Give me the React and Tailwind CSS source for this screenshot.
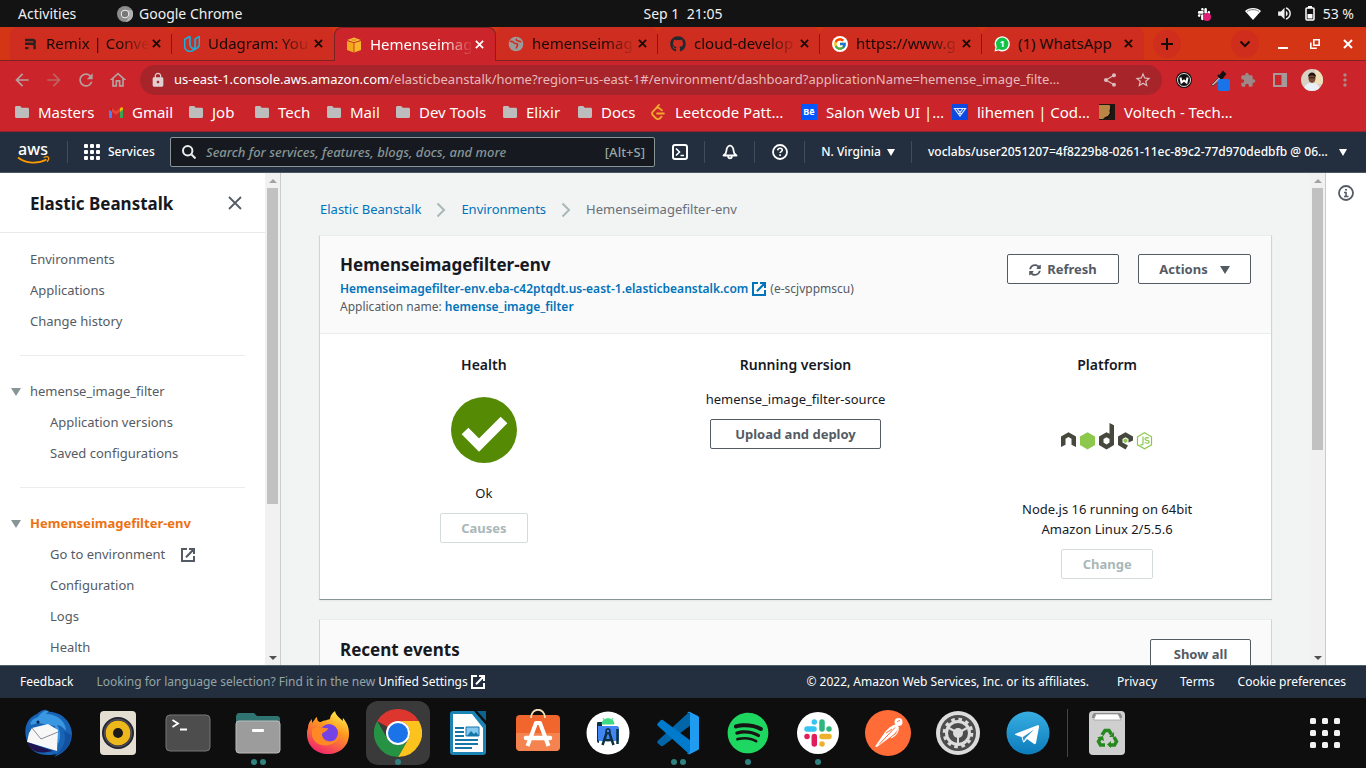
import React from "react";
import { FaGithub, FaSlack, FaSpotify, FaSyncAlt } from "react-icons/fa";
import { FcGoogle } from "react-icons/fc";
import { SiUdacity, SiLeetcode } from "react-icons/si";
import {
  MdArrowBack, MdArrowForward, MdRefresh, MdLock, MdShare, MdStarBorder,
  MdExtension, MdMoreVert, MdVolumeUp, MdOutlineHome,
} from "react-icons/md";

const UI = "font-['Noto_Sans',sans-serif]";

function Globe() {
  return (
    <svg viewBox="0 0 16 16" className="size-4 shrink-0">
      <circle cx="8" cy="8" r="7.3" fill="#9b9b9b" />
      <path d="M2 5.500c2.500-.5 3.500.3 4 1.500s3-.2 3.600 1.400c.6 1.600-1.300 2-1.300 4M9 3c-1.400.5-.6 1.800.8 1.800s1.800 1 3.400 1" fill="none" stroke="#cf2d20" strokeWidth="1.600" />
    </svg>
  );
}

function Remix() {
  return (
    <svg viewBox="0 0 16 16" className="size-4 shrink-0">
      <path d="M3 4h7.500c1.500 0 2.300.7 2.300 1.900s-.8 1.900-2 1.900H3M8 7.900h2.500c1.500 0 2.100.8 2.100 2v3.300" fill="none" stroke="#2a2020" strokeWidth="2.400" />
      <path d="M3 11h3.500v2.200H3z" fill="#2a2020" />
    </svg>
  );
}

function Cube() {
  return (
    <svg viewBox="0 0 16 16" className="size-4 shrink-0">
      <path d="M1 4l6.600 2v9.500L1 13z" fill="#f2a81d" />
      <path d="M15 4L8.400 6v9.500L15 13z" fill="#f7b52a" />
      <path d="M1.200 3L8 .5 14.800 3 8 5.200z" fill="#fbbf3d" />
      <path d="M5 1.800l5.500 2.400M11 1.800L5.500 4.200" stroke="#d98a12" strokeWidth=".7" />
    </svg>
  );
}

function WhatsAppBadge() {
  return (
    <svg viewBox="0 0 16 16" className="size-4 shrink-0">
      <path d="M.5 15.500l1-4A7.600 7.600 0 1 1 4.600 14.600z" fill="#fff" />
      <circle cx="8.200" cy="7.800" r="6.200" fill="#13c143" />
      <path d="M2 14l1-4 3 3z" fill="#13c143" />
      <text x="8.200" y="11.200" fontSize="9.500" fontWeight="700" fill="#fff" textAnchor="middle">1</text>
    </svg>
  );
}

const tabs = [
  { label: "Remix | Conver", icon: <Remix /> },
  { label: "Udagram: You", icon: <SiUdacity className="size-4 shrink-0 text-[#12b5e5]" strokeWidth="1" stroke="currentColor" /> },
  { label: "Hemenseimag", icon: <Cube />, active: true },
  { label: "hemenseimag", icon: <Globe /> },
  { label: "cloud-develop", icon: <FaGithub className="size-4 shrink-0 text-[#24292f]" /> },
  { label: "https://www.g", icon: <span className="flex size-4 shrink-0 items-center justify-center rounded-full bg-white"><FcGoogle className="size-3.5" /></span> },
  { label: "(1) WhatsApp", icon: <WhatsAppBadge />, full: true },
];

function Cross({ className = "" }) {
  return <svg viewBox="0 0 10 10" className={"shrink-0 " + className} fill="none" stroke="currentColor" strokeWidth="2"><path d="M1 1l8 8M9 1L1 9" /></svg>;
}

function Tab({ tab, last }) {
  return (
    <div
      className={
        "relative flex w-[162px] shrink-0 items-center rounded-t-lg pr-2.5 " +
        (tab.active
          ? "z-10 -mb-px border border-b-0 border-[#7b2422] bg-[#cb242a] pl-[11px] text-white"
          : "bg-[#cf2d20] pl-3 text-[#180a08]")
      }
    >
      {tab.icon}
      <span className={"ml-2 min-w-0 flex-1 text-[15px] whitespace-nowrap " + (tab.full ? "" : "mask-r-from-70% mask-r-to-100%")}>
        {tab.label}
      </span>
      <button aria-label="Close tab" className="flex w-3 justify-center"><Cross className="size-[9px]" /></button>
      {!tab.active && !last && <span className="absolute top-1/5 right-0 h-5 w-px bg-[#7b1d16]" />}
    </div>
  );
}

function Folder() {
  return (
    <svg viewBox="0 0 14 12" className="h-3 w-3.5 shrink-0"><path d="M0 1.500C0 .7.600 0 1.500 0h3.700l1.500 1.800h5.800c.9 0 1.500.6 1.500 1.400v7.300c0 .9-.6 1.500-1.500 1.500h-11C.6 12 0 11.400 0 10.500z" fill="#bdbdbd" /></svg>
  );
}

function Gmail() {
  return (
    <svg viewBox="0 0 14 11" className="h-[11px] w-3.5 shrink-0">
      <path d="M0 2v8.200c0 .4.400.8.900.8H3V4.500z" fill="#4285f4" />
      <path d="M14 2v8.200c0 .4-.4.8-.9.8H11V4.500z" fill="#34a853" />
      <path d="M3 1.200l4 3 4-3v3.500l-4 3-4-3z" fill="#ea4335" />
      <path d="M11 1.200C12.500-.3 14 .4 14 1.800v.7l-3 2.300z" fill="#fbbc04" />
      <path d="M3 1.200C1.500-.3 0 .4 0 1.800v.7l3 2.300z" fill="#c5221f" />
    </svg>
  );
}

const bookmarks = [
  ["Masters", "w-[94px]", <Folder />],
  ["Gmail", "w-[80px]", <Gmail />],
  ["Job", "w-[66px]", <Folder />],
  ["Tech", "w-[72px]", <Folder />],
  ["Mail", "w-[69px]", <Folder />],
  ["Dev Tools", "w-[107px]", <Folder />],
  ["Elixir", "w-[75px]", <Folder />],
  ["Docs", "w-[72px]", <Folder />],
  ["Leetcode Patt…", "w-[151px]", <SiLeetcode className="size-4 shrink-0 text-[#f0a92e]" />],
  ["Salon Web UI |…", "w-[151px]", <span className="flex size-4 shrink-0 items-center justify-center bg-[#0057ff] text-[9px] font-bold">Bē</span>],
  ["lihemen | Cod…", "w-[147px]", (
    <svg viewBox="0 0 16 16" className="size-4 shrink-0"><path fill="#0a4ae0" d="M0 0h16v16H0z" /><path d="M2.500 4.500h11L8 12zM5 4.500l3 4 3-4M6 9.500h4" fill="none" stroke="#dfe8ff" strokeWidth="1.200" /></svg>
  )],
  ["Voltech - Tech…", "w-[150px]", (
    <svg viewBox="0 0 16 16" className="size-4 shrink-0"><path fill="#1f1712" d="M0 0h16v16H0z" /><path d="M0 1h10.500l1 3-1 2 .5 3-2 3-3 1-2 2H0z" fill="#b98545" /><path d="M11.500 3c1 2-1 4 0 6-1 3-3 4-5 5" fill="none" stroke="#0c0a08" /></svg>
  )],
];

function Down({ className = "" }) {
  return <svg viewBox="0 0 10 8" preserveAspectRatio="none" className={"shrink-0 " + className}><path d="M0 0h10L5 8z" fill="currentColor" /></svg>;
}

function External({ className = "" }) {
  return (
    <svg viewBox="0 0 14 14" className={"shrink-0 " + className} fill="none" stroke="currentColor" strokeWidth="2">
      <path d="M6 1H1v12h12V8M8 1h5v5M13 1L5 9.300" />
    </svg>
  );
}

function Divider() {
  return <span className="h-[22px] w-px bg-[#414d5c]" />;
}

function AwsBar() {
  return (
    <header className="flex h-[42px] shrink-0 items-center border-t border-b border-t-[#95222d] border-b-[#4c5661] bg-[#232f3e] pr-4 pl-[17px] text-[12px] font-medium text-white">
      <a href="#home" className="flex w-[50px] shrink-0 flex-col">
        <span className="w-8 text-center text-[16px] leading-4">aws</span>
        <svg viewBox="0 0 34 8" className="-mt-px h-2 w-[34px]">
          <path d="M1 1.500c8 6.500 20 6.500 28.500 2" fill="none" stroke="#f90" strokeWidth="1.800" />
          <path d="M26.500 1.500c2-.8 4.500-.8 5 0s-.3 3-1.500 4.300" fill="none" stroke="#f90" strokeWidth="1.300" />
        </svg>
      </a>
      <Divider />
      <button className="ml-4 flex shrink-0 items-center gap-2">
        <svg viewBox="0 0 16 16" className="size-4" fill="#fff">
          {[0, 6, 12].map((y) => [0, 6, 12].map((x) => <rect key={x + "-" + y} x={x} y={y} width="4" height="4" rx="1" />))}
        </svg>
        <span className="w-[62px] text-left">Services</span>
      </button>
      <label className="flex h-[30px] min-w-0 flex-1 items-center rounded-xs border border-[#879596] bg-[#16191f] px-[9px]">
        <svg viewBox="0 0 14 14" className="mr-2.5 ml-0.5 size-3.5 shrink-0" fill="none" stroke="#eaeded" strokeWidth="2"><circle cx="5.700" cy="5.700" r="4.700" /><path d="M9.300 9.300L13.500 13.500" /></svg>
        <input aria-label="Search" placeholder="Search for services, features, blogs, docs, and more" className="min-w-0 flex-1 pt-0.5 text-[13px] outline-none placeholder:text-[#879596] placeholder:italic" />
        <span className="pt-0.5 text-[13px] text-[#95a5a6]">[Alt+S]</span>
      </label>
      <button aria-label="CloudShell" className="flex w-[49px] shrink-0 justify-center">
        <svg viewBox="0 0 16 16" className="size-4" fill="none" stroke="#fff" strokeWidth="2"><rect x="1" y="1" width="14" height="14" rx="2" /><path d="M4 4.500L7.500 8 4 11.500M8.500 11.500h3.500" strokeWidth="1.600" /></svg>
      </button>
      <Divider />
      <button aria-label="Notifications" className="flex w-[49px] shrink-0 justify-center">
        <svg viewBox="0 0 16 16" className="size-4" fill="none" stroke="#fff" strokeWidth="1.800"><path d="M8 1.500c-2.500.8-3.500 2.500-3.500 5 0 2-1 3.500-3 5h13c-2-1.500-3-3-3-5 0-2.500-1-4.200-3.500-5zM6 12.500c.5 2.500 3.500 2.500 4 0" strokeLinejoin="round" /></svg>
      </button>
      <Divider />
      <button aria-label="Help" className="flex w-[49px] shrink-0 justify-center">
        <svg viewBox="0 0 16 16" className="size-4" fill="none" stroke="#fff" strokeWidth="1.800"><circle cx="8" cy="8" r="7" /><path d="M5.700 6.300c.2-1.600 1.100-2.100 2.300-2.100 1.400 0 2.300.8 2.300 1.900 0 1.500-2.200 1.500-2.200 3M8.100 10.200v1.800" strokeWidth="1.600" /></svg>
      </button>
      <Divider />
      <button className="flex w-[106px] shrink-0 items-center justify-center gap-1.5">N. Virginia <Down className="h-[7px] w-2" /></button>
      <Divider />
      <button className="flex shrink-0 items-center justify-end gap-1.5 pl-4">
        <span className="w-[405px] text-left whitespace-nowrap">voclabs/user2051207=4f8229b8-0261-11ec-89c2-77d970dedbfb @ 06...</span>
        <Down className="mr-[3px] h-[7px] w-2" />
      </button>
    </header>
  );
}

function ScrollBar({ thumb }) {
  return (
    <div className="flex w-[15px] shrink-0 flex-col items-center bg-[#f1f1f1]">
      <div className="flex h-[15px] items-center"><Down className="h-1 w-2 rotate-180 text-[#a3a3a3]" /></div>
      <div className={"w-[11px] bg-[#c1c1c1] " + thumb} />
      <div className="mt-auto flex h-[15px] items-center"><Down className="h-1 w-2 text-[#505050]" /></div>
    </div>
  );
}

function NavItem({ children, sub, href = "#nav" }) {
  return (
    <li className={"flex h-[31px] items-center pt-0.5 " + (sub ? "pl-[50px]" : "pl-[30px]")}>
      <a href={href} className="flex items-center gap-3">{children}</a>
    </li>
  );
}

function Group({ label, active }) {
  return (
    <li className="flex h-[31px] items-center pt-0.5 pl-[11px]">
      <button aria-label={"Toggle " + label} className="w-[19px] text-[#879596]"><Down className="h-2 w-2.5" /></button>
      <a href="#group" className={active ? "font-bold text-[#ec7211]" : ""}>{label}</a>
    </li>
  );
}

function Sidebar() {
  return (
    <aside className="flex w-[281px] shrink-0 overflow-hidden border-r border-[#c8cccc] bg-white">
      <div className="min-w-0 flex-1 overflow-hidden">
        <div className="flex h-[60px] items-center justify-between border-b border-[#e6e9e9] pr-[23px] pl-[30px]">
          <h2 className="pt-0.5 text-[17px] font-bold text-[#16191f]">Elastic Beanstalk</h2>
          <button aria-label="Close navigation" className="text-[#545b64]">
            <svg viewBox="0 0 14 14" className="size-3.5" fill="none" stroke="currentColor" strokeWidth="1.800"><path d="M1 1l12 12M13 1L1 13" /></svg>
          </button>
        </div>
        <nav className="pt-[10px] text-[13px] text-[#545b64]">
          <ul><NavItem>Environments</NavItem><NavItem>Applications</NavItem><NavItem>Change history</NavItem></ul>
          <hr className="mx-5 my-[19px] border-[#eaeded]" />
          <ul><Group label="hemense_image_filter" /><NavItem sub>Application versions</NavItem><NavItem sub>Saved configurations</NavItem></ul>
          <hr className="mx-5 my-[19px] border-[#eaeded]" />
          <ul>
            <Group label="Hemenseimagefilter-env" active />
            <NavItem sub>Go to environment <External className="ml-1 size-3.5" /></NavItem>
            <NavItem sub>Configuration</NavItem><NavItem sub>Logs</NavItem><NavItem sub>Health</NavItem>
          </ul>
        </nav>
      </div>
      <ScrollBar thumb="h-[316px]" />
    </aside>
  );
}

function Button({ children, disabled, className = "" }) {
  return (
    <button
      disabled={disabled}
      className={"flex h-[30px] items-center justify-center rounded-xs border bg-white pt-0.5 text-[13px] font-bold " +
        (disabled ? "border-[#d5dbdb] text-[#aab7b8] " : "border-[#545b64] text-[#545b64] ") + className}
    >
      {children}
    </button>
  );
}

function NodeLogo() {
  return (
    <svg viewBox="0 0 92 28" className="h-7 w-[92px]">
      <path d="M0 24V13.500L7.500 9.200 15 13.500V24l-4.500-2.300v-6L7.500 14l-3 1.700v6z" fill="#46483e" />
      <path d="M26.500 9.200L34 13.500v8.600l-7.500 4.300-7.500-4.300v-8.600z" fill="#8cc84b" />
      <path fillRule="evenodd" d="M48.500 0l4.500 2.300v19.800l-7.500 4.300-7.500-4.300v-8.600l7.500-4.300 3 1.600zM45.500 14.200l-3 1.800v3.600l3 1.800 3-1.800V16z" fill="#46483e" />
      <path fillRule="evenodd" d="M64.500 9.200L72 13.500v4l-4.500 2v-3.500l-3-1.800-3 1.800v3.600l5.500 3-2.500 3.800-7.500-4.300v-8.600z" fill="#46483e" />
      <path d="M64.500 15.500l2 1.100v2.200l-2 1.100-2-1.100v-2.200z" fill="#8cc84b" />
      <path d="M83.500 9.800l7 4v8l-7 4-7-4v-8z" fill="#fff" stroke="#8cc84b" strokeWidth="1.200" />
      <path d="M82 13.500v7c0 1.500-1.500 1.800-2.700.9M88 15.200c-1.500-1-4-.7-4 .8 0 1.800 4.200.8 4.200 2.800 0 1.700-2.900 1.900-4.500.6" fill="none" stroke="#8cc84b" strokeWidth="1.200" />
    </svg>
  );
}

function Crumb() {
  return <svg viewBox="0 0 10 16" className="mx-[15px] h-4 w-2.5" fill="none" stroke="#aab7b8" strokeWidth="2"><path d="M1.500 1.500L8 8l-6.500 6.500" /></svg>;
}

function Content() {
  return (
    <main className="min-w-0 flex-1 overflow-hidden bg-[#f2f3f3] px-[38px] text-[13px] text-[#16191f]">
      <nav aria-label="Breadcrumb" className="flex h-[62px] items-center pt-3 pl-px text-[#0073bb]">
        <a href="#eb">Elastic Beanstalk</a>
        <Crumb />
        <a href="#envs">Environments</a>
        <Crumb />
        <span className="text-[#687078]">Hemenseimagefilter-env</span>
      </nav>

      <section className="border border-t-[#eaeded] border-r-[#d0d4d4] border-b-[#879596] border-l-[#d0d4d4] bg-white shadow-xs">
        <div className="flex justify-between border-b border-[#eaeded] bg-[#fafafa] px-5 pt-[15px] pb-[18px]">
          <div>
            <h1 className="h-7 text-[17px] leading-7 font-bold">Hemenseimagefilter-env</h1>
            <p className="flex h-[18px] items-center pt-px text-[12px] text-[#545b64]">
              <a href="#url" className="font-semibold text-[#0073bb]">Hemenseimagefilter-env.eba-c42ptqdt.us-east-1.elasticbeanstalk.com</a>
              <External className="mx-1 size-3.5 text-[#0073bb]" />
              (e-scjvppmscu)
            </p>
            <p className="h-[18px] text-[12px] leading-5 text-[#545b64]">
              Application name: <a href="#app" className="font-semibold text-[#0073bb]">hemense_image_filter</a>
            </p>
          </div>
          <div className="flex gap-[19px] pt-[3px]">
            <Button className="w-28 gap-1.5"><FaSyncAlt className="size-3" />Refresh</Button>
            <Button className="w-[113px] gap-3">Actions <Down className="h-2 w-2.5" /></Button>
          </div>
        </div>
        <div className="grid h-[265px] grid-cols-3 px-2 pt-[21px]">
          <div className="flex flex-col items-center">
            <h3 className="text-[14px] leading-5 font-semibold">Health</h3>
            <svg viewBox="0 0 66 66" className="mt-[22px] size-[66px]"><circle cx="33" cy="33" r="33" fill="#548a04" /><path d="M14 34l14 14 25-25" fill="none" stroke="#fff" strokeWidth="9.500" /></svg>
            <p className="mt-5 mb-2.5 leading-5">Ok</p>
            <Button disabled className="w-[88px]">Causes</Button>
          </div>
          <div className="flex flex-col items-center">
            <h3 className="text-[14px] leading-5 font-semibold">Running version</h3>
            <p className="mt-[14px] mb-2.5 leading-5">hemense_image_filter-source</p>
            <Button className="w-[171px]">Upload and deploy</Button>
          </div>
          <div className="flex flex-col items-center">
            <h3 className="text-[14px] leading-5 font-semibold">Platform</h3>
            <div className="my-12"><NodeLogo /></div>
            <p className="mb-2.5 text-center leading-5">Node.js 16 running on 64bit<br />Amazon Linux 2/5.5.6</p>
            <Button disabled className="w-[92px]">Change</Button>
          </div>
        </div>
      </section>

      <section className="mt-[19px] h-24 border border-[#d0d4d4] border-t-[#eaeded] bg-[#fafafa]">
        <div className="flex justify-between px-5 pt-[19px]">
          <h2 className="text-[17px] leading-[22px] font-bold">Recent events</h2>
          <Button className="w-[101px]">Show all</Button>
        </div>
      </section>
    </main>
  );
}

const dock = [
  { name: "Thunderbird", dots: 0, icon: (
    <svg viewBox="0 0 48 48" className="size-12">
      <path d="M3 32C-2 17 5 8 13 5c3-3 7-5 10-4l-2 2c14-2 26 8 27 21 0 12-7 20-18 24l3-3-6 1C13 47 6 41 3 32z" fill="#1863b4" />
      <path d="M14 8c4-6 8-7 11-6l-3 3c12 0 20 8 20 17-3-4-6-6-9-6 4 6 4 14 1 19l-3-18-17-3-7 2c-2-3 2-6 7-8z" fill="#3a97e2" />
      <path d="M40 22c3 9-1 18-8 24 9-3 15-11 15-20z" fill="#1250a0" />
      <path d="M5 24l3-5 16-4 10 6-1 21L3 33z" fill="#f7f7f8" />
      <path d="M8 19l9 11 17-7" fill="none" stroke="#8b8b94" strokeWidth="1" />
      <path d="M3 33l26 9-6 1C13 45 6 41 3 33z" fill="#20134f" />
      <circle cx="14" cy="13" r="1.500" fill="#0d1e38" />
    </svg>) },
  { name: "Rhythmbox", dots: 0, icon: (
    <svg viewBox="0 0 48 48" className="size-12">
      <rect x="6" y="2" width="36" height="44" rx="4" fill="#e4ded2" /><circle cx="24" cy="24" r="16" fill="#242430" /><circle cx="24" cy="24" r="12.500" fill="#edb81b" /><circle cx="24" cy="24" r="13.500" fill="none" stroke="#4c4c58" strokeWidth="1.500" /><circle cx="24" cy="24" r="5" fill="#1d1b1a" />
    </svg>) },
  { name: "Terminal", dots: 0, icon: (
    <svg viewBox="0 0 48 48" className="size-12">
      <rect x="2" y="6" width="44" height="36" rx="4" fill="#4d4d4d" stroke="#777" /><path d="M8.500 11l5.500 3.500L8.500 18M16 20.500h7" fill="none" stroke="#fff" strokeWidth="1.800" />
    </svg>) },
  { name: "Files", dots: 2, icon: (
    <svg viewBox="0 0 48 48" className="size-12">
      <path d="M2 8c0-2 1-4 3-4h15l3 3h20c2 0 3 1 3 3v12H2z" fill="#2f7470" /><rect x="2" y="12" width="44" height="32" rx="3" fill="#9c9c9c" stroke="#bcbcbc" /><rect x="18" y="20" width="12" height="3" rx="1" fill="#fff" />
    </svg>) },
  { name: "Firefox", dots: 0, icon: (
    <svg viewBox="0 0 48 48" className="size-12">
      <defs><linearGradient id="fx" x1=".8" y1="0" x2=".3" y2="1"><stop offset="0" stopColor="#fff44f" /><stop offset=".4" stopColor="#ff9a1f" /><stop offset="1" stopColor="#f0246c" /></linearGradient></defs>
      <path d="M4 19c0-5 3-8 4-9v4c2-2 3-5 5-6 0 3 1 5 4 5 3-2 8-2 9-3 0-3 2-6 5-8 1 5 5 7 8 10-.5-2 0-3 0-3 4 5 6 9 6 16 0 12-9 20-21 20S3 37 3 25c0-2 0-4 1-6z" fill="url(#fx)" />
      <circle cx="25" cy="24" r="9" fill="#7542e5" />
      <path d="M8 20c7-4 11 0 16-1 0 3-5 4-6 6 0 7 11 12 18 1-2 11-23 16-28 1z" fill="#ff8a25" />
    </svg>) },
  { name: "Chrome", dots: 1, active: true, icon: (
    <svg viewBox="0 0 48 48" className="size-12">
      <path d="M24 24L3.200 12A24 24 0 0 1 44.800 12z" fill="#dc362e" />
      <path d="M24 24L44.800 12H24A12 12 0 0 1 34.400 30L24 48A24 24 0 0 0 44.800 12z" fill="#fcc31e" />
      <path d="M3.200 12A24 24 0 0 0 24 48l10.400-18A12 12 0 0 1 13.600 30z" fill="#269344" />
      <circle cx="24" cy="24" r="12" fill="#fff" /><circle cx="24" cy="24" r="10" fill="#1a73e8" />
    </svg>) },
  { name: "Writer", dots: 0, icon: (
    <svg viewBox="0 0 48 48" className="size-12">
      <path d="M9 2h21l12 14v27c0 2-1 3-3 3H9c-2 0-3-1-3-3V5c0-2 1-3 3-3z" fill="#1c83b5" /><path d="M9 5h19l11 14v24H9z" fill="#fff" /><path d="M33 2h9v10z" fill="#0d638f" />
      <path d="M11 19h9M11 23h9M11 27h9M11 31h23M11 35h23M11 39h17" stroke="#1676a8" strokeWidth="2" /><path d="M22 18h13v9H22z" fill="#86c8f0" stroke="#1676a8" /><path d="M23 27l4-5 3 3 2-2 3 4z" fill="#1676a8" />
    </svg>) },
  { name: "Software", dots: 0, icon: (
    <svg viewBox="0 0 48 48" className="size-12">
      <rect x="2" y="6" width="44" height="36" rx="4" fill="#f0662d" /><path d="M2 24h44v14c0 2-2 4-4 4H6c-2 0-4-2-4-4z" fill="#f5834f" /><path d="M17 9c0-11 14-11 14 0" fill="none" stroke="#f7dfb8" strokeWidth="1.800" />
      <path d="M13.500 37L22 14h4l8.500 23" fill="none" stroke="#fff" strokeWidth="4" strokeLinejoin="round" /><path d="M12 29h24" stroke="#fff" strokeWidth="4.500" strokeLinecap="round" />
    </svg>) },
  { name: "Android Studio", dots: 0, icon: (
    <svg viewBox="0 0 48 48" className="size-12">
      <circle cx="24" cy="24" r="21.500" fill="#fff" /><path d="M13 14c0-1 1-1 1-1h4v4h-3v17c-1 0-2-1-2-2z" fill="#0b3042" /><path d="M14 17h19c1 0 2 1 2 2v13H16c-1 0-2-1-2-2z" fill="#4285f4" /><path d="M18 15c0-7 12-7 12 0zM19 9l1.500 2.500M29 9l-1.500 2.500" fill="#3ddc84" stroke="#3ddc84" strokeWidth="1" /><path d="M24 20l-5.500 16M24 20l5.500 16M20 30c3 2 5 2 8 0M33.500 20v15" fill="none" stroke="#0b3042" strokeWidth="2.500" /><circle cx="24" cy="22" r="2" fill="#4285f4" stroke="#0b3042" strokeWidth="1.500" />
    </svg>) },
  { name: "VS Code", dots: 2, icon: (
    <svg viewBox="0 0 48 48" className="size-12">
      <path d="M34 4l3 1v11L9.500 36.500c-1 1-2 1-3 0L4 34.500c-1-1-1-2 0-3z" fill="#0065a9" /><path d="M4 17c-1-1-1-2 0-3l2.500-2.500c1-1 2-1 3 0L37 32v12h-3z" fill="#007acc" /><path d="M33 4c1-1.300 2-1.500 3-1l7 3.500c1.500.5 2 1 2 2.500v30c0 1.500-.5 2-2 2.500L36 45c-1 .5-2.500.3-3.500-1 2 1 3.500 0 3.500-2V6c0-2-1-2.500-3-2z" fill="#1f9cf0" />
    </svg>) },
  { name: "Spotify", dots: 1, icon: <FaSpotify className="size-[42px] rounded-full bg-[#191414] text-[#1ed760]" /> },
  { name: "Slack", dots: 1, icon: (
    <svg viewBox="0 0 48 48" className="size-12">
      <circle cx="24" cy="24" r="21" fill="#fff" />
      <g fill="none" strokeWidth="5.500" strokeLinecap="round"><path d="M13 20h7M20.300 13v0" stroke="#36c5f0" /><path d="M28 13v7M35 20v0" stroke="#2eb67d" /><path d="M28 27.500h7M28 35v0" stroke="#ecb22e" /><path d="M20.300 27.500v7.500M13 27.500v0" stroke="#e01e5a" /></g>
    </svg>) },
  { name: "Postman", dots: 0, icon: (
    <svg viewBox="0 0 48 48" className="size-12">
      <circle cx="24" cy="24" r="23" fill="#ff6c37" />
      <path d="M31.500 15.500c1.500 0 3 1.500 3 3-1 3-3 5-5.500 7.500L13 38l-2-.5L21 23c3-3.500 6.500-6.500 10.500-7.500z" fill="#fff" />
      <path d="M34 18c1 5-3 9-7 11M22 27l-3 5M29 20l-6 6" fill="none" stroke="#fff" strokeWidth="1.300" />
      <path d="M31 18.500L15 35.500M28 20l-6 4" fill="none" stroke="#ff6c37" strokeWidth="1" />
      <circle cx="34.500" cy="13" r="4" fill="#fff" /><path d="M33 12.500l3-1" stroke="#ff6c37" strokeWidth=".9" />
    </svg>) },
  { name: "Settings", dots: 0, icon: (
    <svg viewBox="0 0 48 48" className="size-12">
      <circle cx="24" cy="24" r="22" fill="#dcdcdc" /><circle cx="24" cy="24" r="18" fill="#4d4d4d" />
      <circle cx="24" cy="24" r="11.500" fill="none" stroke="#dcdcdc" strokeWidth="3" /><circle cx="24" cy="24" r="13.800" fill="none" stroke="#dcdcdc" strokeWidth="3" strokeDasharray="3.600 3.625" /><circle cx="24" cy="24" r="5" fill="#dcdcdc" /><path d="M24 24V35M24 24L14 18.500M24 24l10-5.500" stroke="#dcdcdc" strokeWidth="2" />
    </svg>) },
  { name: "Telegram", dots: 0, icon: (
    <svg viewBox="0 0 48 48" className="size-12">
      <defs><linearGradient id="tg" x1="0" y1="0" x2="0" y2="1"><stop offset="0" stopColor="#37aee2" /><stop offset="1" stopColor="#0c7cbb" /></linearGradient></defs>
      <circle cx="24" cy="24" r="21.500" fill="url(#tg)" /><path d="M11 25l22.500-8.700c1.200-.4 1.800.3 1.500 1.700L32 34c-.3 1.200-1.200 1.400-2.200.8L23 30l-2.500 3c-.8.700-1.400.4-1.600-.6L17.500 28 11 25.800z" fill="#fff" /><path d="M18.500 28.300L30 20.500l-8.500 8.800-1.700 3z" fill="#2f95cf" />
    </svg>) },
];

function DockIcon({ app }) {
  return (
    <button aria-label={app.name} className="relative flex w-[70px] shrink-0 justify-center">
      <span className={"flex size-16 items-center justify-center rounded-xl " + (app.active ? "bg-[#3a3a3a]" : "")}>{app.icon}</span>
      <span className="absolute inset-x-0 bottom-0 flex justify-center gap-[3px]">
        {Array.from({ length: app.dots }).map((_, i) => <span key={i} className="size-1.5 rounded-full bg-[#308280]" />)}
      </span>
    </button>
  );
}

export default function App() {
  return (
    <div className={"flex h-screen flex-col overflow-hidden bg-[#0e0e0e] " + UI}>
      <div className="grid h-[27px] shrink-0 grid-cols-3 items-center bg-[#131313] px-[18px] text-[14px] text-[#f0f0f0]">
        <div className="flex items-center">
          <button className="w-[99px] text-left">Activities</button>
          <svg viewBox="0 0 16 16" className="mr-1.5 size-4"><circle cx="8" cy="8" r="8" fill="#8c8c8c" /><path d="M8 4h7a8 8 0 0 1-6 12l3-6z" fill="#b0b0b0" /><circle cx="8" cy="8" r="4.200" fill="#eee" /><circle cx="8" cy="8" r="3.200" fill="#777" /></svg>
          Google Chrome
        </div>
        <div className="text-center whitespace-pre">Sep 1  21:05</div>
        <div className="-mr-1.5 flex items-center justify-end">
          <span className="relative mr-[34px] text-white"><FaSlack className="size-3.5" /><span className="absolute right-0 bottom-0 size-2 rounded-full bg-[#e01e78]" /></span>
          <svg viewBox="0 0 16 12" className="mr-[15px] h-3 w-4"><path d="M0 3C4-1 12-1 16 3L8 12z" fill="#fff" /><path d="M2 3.500c3.500-2.500 8.500-2.500 12 0" stroke="#777" fill="none" /></svg>
          <MdVolumeUp className="mr-3 size-[17px]" />
          <svg viewBox="0 0 10 15" className="mr-2 h-[15px] w-2.5"><rect x="1" y="2" width="8" height="12" rx="1" fill="none" stroke="#fff" strokeWidth="1.500" /><path d="M3 0h4v2H3zM2.500 8h5v4.500h-5z" fill="#fff" /></svg>
          53 %
        </div>
      </div>

      <div className="flex h-[34px] shrink-0 border-b border-[#7b2422] bg-[#d43515] pl-2.5">
        {tabs.map((t, i) => <Tab key={t.label} tab={t} last={i === 1 || i === 6} />)}
        <div className="flex flex-1 items-center pl-[9px]">
          <button aria-label="New tab" className="flex size-7 items-center justify-center rounded-full bg-[#d02e1c]">
            <svg viewBox="0 0 12 12" className="size-3" stroke="#180a08" strokeWidth="2"><path d="M6 0v12M0 6h12" /></svg>
          </button>
          <button aria-label="Search tabs" className="ml-auto flex size-7 items-center justify-center rounded-full bg-[#d02e1c]">
            <svg viewBox="0 0 12 12" className="size-3" stroke="#180a08" strokeWidth="2" fill="none"><path d="M1.500 3.500L6 8l4.500-4.500" /></svg>
          </button>
          <button aria-label="Minimize" className="ml-[19px] h-2.5 w-2.5 border-b-2 border-white" />
          <button aria-label="Restore" className="ml-[22px]">
            <svg viewBox="0 0 10 10" className="size-2.5" stroke="#fff" strokeWidth="1.600" fill="none"><path d="M3.800.8h5.400v5.400H3.800zM.8 3.500v5.700h6" /></svg>
          </button>
          <button aria-label="Close window" className="mr-[13px] ml-[23px] text-white"><Cross className="size-2.5" /></button>
        </div>
      </div>

      <div className="flex h-[38px] shrink-0 items-center bg-[#cb242a] pr-[15px] pl-3">
        <button aria-label="Back" className="w-8 text-[#b5a0a0]"><MdArrowBack className="size-5" /></button>
        <button aria-label="Forward" className="w-8 text-[#bf6466]"><MdArrowForward className="size-5" /></button>
        <button aria-label="Reload" className="w-8 text-[#b5a0a0]"><MdRefresh className="size-5" /></button>
        <button aria-label="Home" className="w-8 text-[#b5a0a0]"><MdOutlineHome className="size-5" /></button>
        <label className="flex h-[30px] min-w-0 flex-1 items-center rounded-full bg-[#a7242a] px-2.5">
          <MdLock className="mr-2 size-4 shrink-0 text-[#e0d0d0]" />
          <span className="min-w-0 flex-1 text-[13px] whitespace-nowrap text-[#e9b9ba]"><span className="text-white">us-east-1.console.aws.amazon.com</span>/elasticbeanstalk/home?region=us-east-1#/environment/dashboard?applicationName=hemense_image_filte…</span>
          <MdShare className="mr-4 size-4 shrink-0 text-[#d9bcbc]" />
          <MdStarBorder className="size-[18px] shrink-0 text-[#d9bcbc]" />
        </label>
        <svg viewBox="0 0 16 16" className="ml-3.5 size-4"><circle cx="8" cy="8" r="8" fill="#111" /><circle cx="8" cy="8" r="6.500" fill="none" stroke="#ddd" /><path d="M4.500 5.500l1 5 2.500-2 2.500 2 1-5" fill="none" stroke="#fff" strokeWidth="2" /></svg>
        <svg viewBox="0 0 20 22" className="ml-[18px] h-[22px] w-5"><path d="M1 16l8-8 2 2-8 7z" fill="#c99" stroke="#333" strokeWidth=".8" /><path d="M8 6l5 5M10 7l3-4 2 2-3 4z" stroke="#111" strokeWidth="2" fill="#111" /><rect x="8" y="10" width="12" height="12" rx="2" fill="#1a73e8" /></svg>
        <MdExtension className="ml-2.5 size-4 text-[#9c8a8a]" />
        <svg viewBox="0 0 14 14" className="ml-[17px] size-3.5"><path d="M1 1h12v12H1z" fill="none" stroke="#a39a9a" strokeWidth="2" /><path d="M8.500 1H13v12H8.500z" fill="#a39a9a" /></svg>
        <svg viewBox="0 0 22 22" className="ml-3.5 size-[22px]"><defs><clipPath id="av"><circle cx="11" cy="11" r="11" /></clipPath></defs><g clipPath="url(#av)"><path fill="#d9d2c4" d="M0 0h22v22H0z" /><path fill="#efe0b8" d="M14 0h8v15h-8z" /><path d="M3 22c0-7 4-8 8-8s8 2 8 8z" fill="#e9f0f7" /><ellipse cx="11" cy="9" rx="3.600" ry="5" fill="#7b4a33" /><path d="M7 8c0-6 8-6 8 0-2-2-6-2-8 0z" fill="#1d1512" /><path d="M8 8.800h6" stroke="#222" /></g></svg>
        <MdMoreVert className="-mr-1 ml-3 size-5 text-[#a88]" />
      </div>

      <div className="flex h-8 shrink-0 items-center bg-[#cb242a] pb-1.5 pl-[15px] text-[15px] text-white">
        {bookmarks.map(([label, w, icon]) => (
          <a key={label} href="#bookmark" className={"flex shrink-0 items-center gap-[9px] whitespace-nowrap " + w}>{icon}{label}</a>
        ))}
      </div>

      <AwsBar />

      <div className="flex min-h-0 flex-1">
        <Sidebar />
        <Content />
        <ScrollBar thumb="h-[262px]" />
        <aside className="flex w-[41px] shrink-0 justify-center border-l border-[#c8cccc] bg-white pt-3">
          <button aria-label="Info" className="h-4">
            <svg viewBox="0 0 16 16" className="size-4" fill="none" stroke="#545b64" strokeWidth="1.800"><circle cx="8" cy="8" r="7" /><path d="M6 7.500h2V11M6 11.500h4.500M7 4.800h2" strokeWidth="1.600" /></svg>
          </button>
        </aside>
      </div>

      <footer className="flex h-[33px] shrink-0 items-center border-t border-[#4d6066] bg-[#232f3e] px-5 text-[12px] text-white">
        <button className="mr-[23px]">Feedback</button>
        <span className="text-[#95a5a6]">Looking for language selection? Find it in the new <a href="#settings" className="text-white">Unified Settings</a></span>
        <External className="ml-[3px] size-3.5" />
        <span className="ml-auto">© 2022, Amazon Web Services, Inc. or its affiliates.</span>
        <a href="#privacy" className="ml-[28px]">Privacy</a>
        <a href="#terms" className="ml-[23px]">Terms</a>
        <button className="ml-[23px]">Cookie preferences</button>
      </footer>

      <div className="flex h-[70px] shrink-0 items-center bg-[#0e0e0e] pl-[13px]">
        {dock.map((a) => <DockIcon key={a.name} app={a} />)}
        <span className="ml-1 h-12 w-px bg-[#444]" />
        <button aria-label="Trash" className="ml-[15px]">
          <svg viewBox="0 0 48 48" className="size-12">
            <rect x="6" y="2" width="36" height="44" rx="4" fill="#cfcfcf" /><path d="M9 9c0-3 1-5 3-5h24c2 0 3 2 3 5z" fill="#8a8a8a" /><path d="M11 10l2-5h22l3 6H11z" fill="#fff" stroke="#999" strokeWidth=".7" />
            <g fill="none" stroke="#26891e" strokeWidth="3.500"><path d="M19 26l3-4.500h4l2.500 4" /><path d="M31 28l2.500 4.500-2 3.500H26" /><path d="M22 36h-4.500l-2-3.500L18 28.500" /></g>
            <path d="M31 23v5h-5zM28 32v7l-4-3.500zM14 28.500l6-1.500 1 5z" fill="#26891e" />
          </svg>
        </button>
        <button aria-label="Show applications" className="mr-[26px] ml-auto">
          <svg viewBox="0 0 30 30" className="size-[30px]" fill="#f2f2f2">
            {[0, 12, 24].map((y) => [0, 12, 24].map((x) => <rect key={x + "-" + y} x={x} y={y} width="6" height="6" rx="1.500" />))}
          </svg>
        </button>
      </div>
    </div>
  );
}
